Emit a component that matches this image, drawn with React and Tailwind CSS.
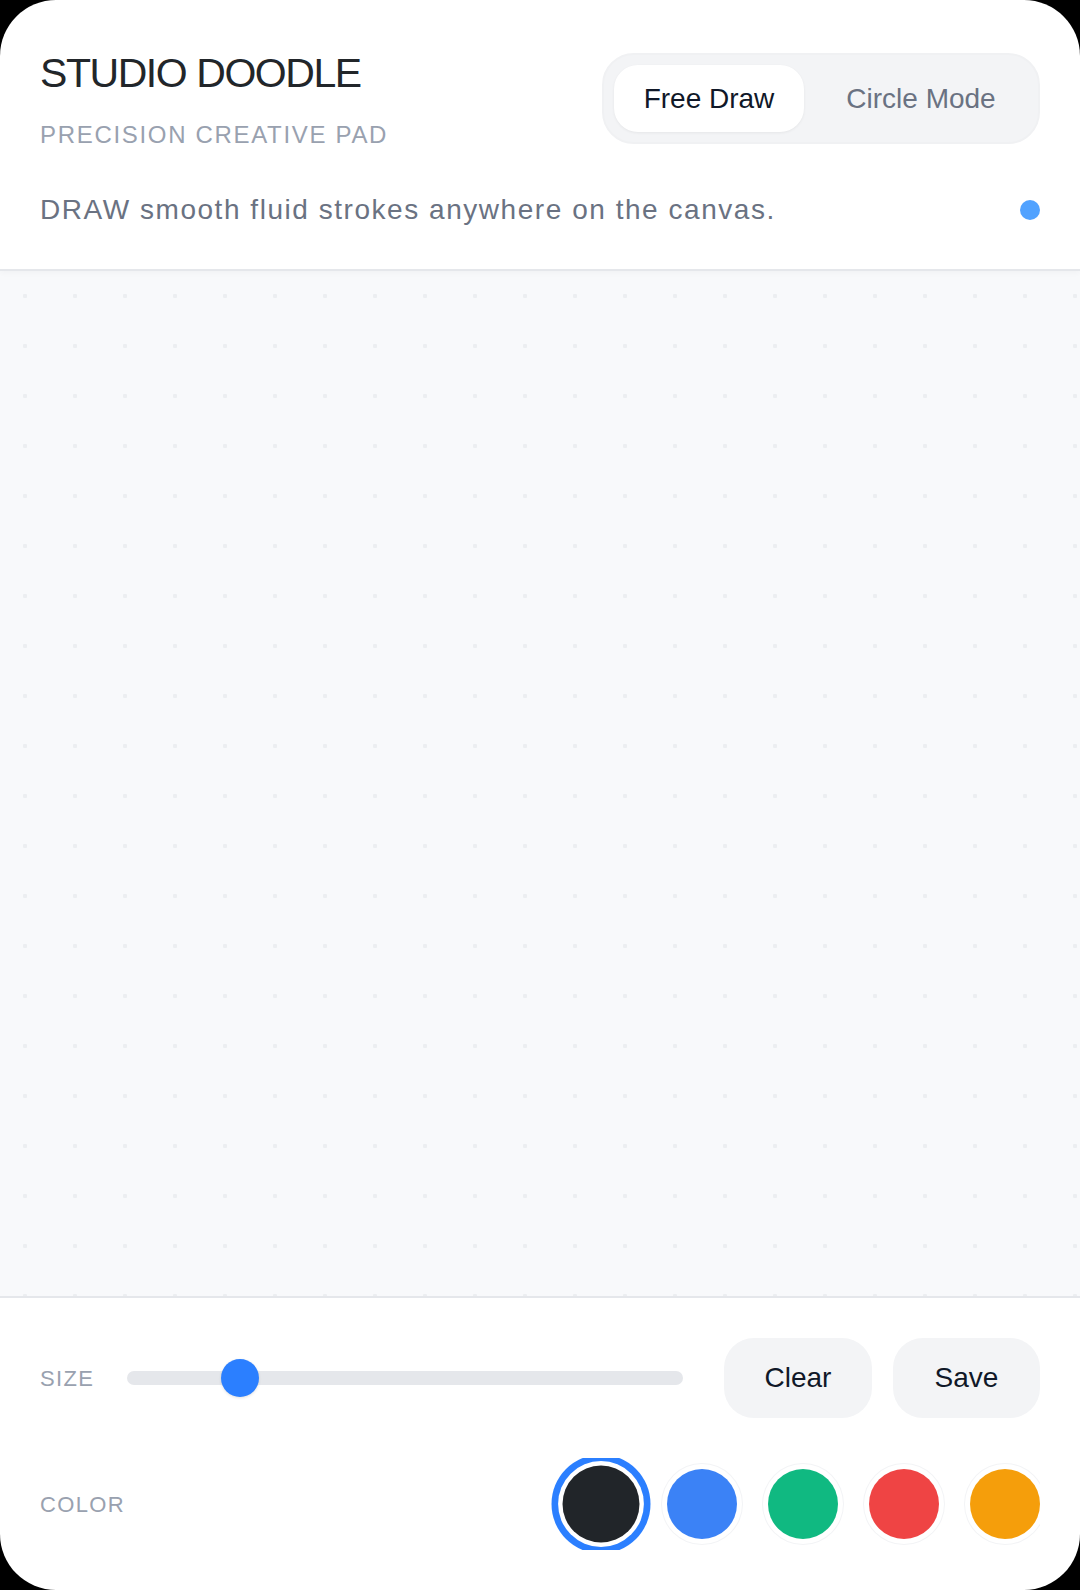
import { useState } from 'react'

const COLORS = [
  { name: 'ink', value: '#212529' },
  { name: 'blue', value: '#3b82f6' },
  { name: 'green', value: '#10b981' },
  { name: 'red', value: '#ef4444' },
  { name: 'amber', value: '#f59e0b' },
]

export default function App() {
  const [mode, setMode] = useState('free')
  const [color, setColor] = useState('ink')

  return (
    <div className="min-h-screen bg-black font-['Liberation_Sans',Arial,sans-serif]">
      <div className="h-screen flex flex-col bg-white rounded-[56px] overflow-hidden">
        {/* header */}
        <div className="px-10 pt-[53px] pb-[39px] border-b-2 border-gray-200 shadow-[0_2px_6px_rgba(0,0,0,0.03)] relative z-10">
          <div className="flex justify-between items-start">
            <div>
              <h1 className="text-[41px] leading-none tracking-[-0.035em] text-[#22262a]">STUDIO DOODLE</h1>
              <div className="mt-[29px] text-[24px] leading-none tracking-[0.07em] text-gray-400">PRECISION CREATIVE PAD</div>
            </div>
            <div className="flex w-[438px] h-[91px] p-[10px] gap-[10px] bg-gray-100 rounded-[32px] border-2 border-[#f0f1f3]">
              <button
                onClick={() => setMode('free')}
                className={
                  mode === 'free'
                    ? 'w-[190px] rounded-[24px] bg-white text-[28px] text-gray-900 shadow-[0_1px_3px_rgba(0,0,0,0.06)]'
                    : 'w-[190px] rounded-[24px] text-[28px] text-gray-500'
                }
              >
                Free Draw
              </button>
              <button
                onClick={() => setMode('circle')}
                className={
                  mode === 'circle'
                    ? 'flex-1 rounded-[24px] bg-white text-[28px] text-gray-900 shadow-[0_1px_3px_rgba(0,0,0,0.06)]'
                    : 'flex-1 rounded-[24px] text-[28px] text-gray-500'
                }
              >
                Circle Mode
              </button>
            </div>
          </div>
          <div className="mt-[43px] flex items-center justify-between">
            <p className="text-[28px] leading-[40px] tracking-[0.055em] text-gray-500">
              DRAW smooth fluid strokes anywhere on the canvas.
            </p>
            <span className="w-[20px] h-[20px] rounded-full bg-blue-400" />
          </div>
        </div>

        {/* canvas */}
        <div className="flex-1 bg-[#f8f9fb] bg-[radial-gradient(circle,#eceef1_2px,transparent_2.5px)] bg-[length:50px_50px]" />

        {/* controls */}
        <div className="border-t-2 border-gray-200 px-10 pt-10 pb-10 flex flex-col gap-10">
          <div className="flex items-center h-[80px]">
            <span className="w-[87px] text-[22px] tracking-[0.06em] text-gray-400">SIZE</span>
            <div className="flex-1 h-[14px] rounded-full bg-gray-200 relative">
              <span className="absolute left-[94px] top-1/2 -translate-y-1/2 w-[38px] h-[38px] rounded-full bg-blue-500 shadow-[0_1px_3px_rgba(0,0,0,0.12)]" />
            </div>
            <button className="ml-[41px] w-[148px] h-[80px] rounded-[30px] bg-gray-100 text-[28px] text-gray-900">Clear</button>
            <button className="ml-[21px] w-[147px] h-[80px] rounded-[30px] bg-gray-100 text-[28px] text-gray-900">Save</button>
          </div>
          <div className="flex items-center justify-between">
            <span className="text-[22px] tracking-[0.06em] text-gray-400">COLOR</span>
            <div className="flex gap-[31px] py-[11px] pl-[16px] overflow-hidden">
              {COLORS.map((c) => (
                <button
                  key={c.name}
                  onClick={() => setColor(c.name)}
                  style={{ backgroundColor: c.value }}
                  className={
                    color === c.name
                      ? 'w-[70px] h-[70px] shrink-0 rounded-full scale-110 ring-[6px] ring-blue-500 ring-offset-4 ring-offset-white'
                      : 'w-[70px] h-[70px] shrink-0 rounded-full shadow-[0_0_0_5px_#ffffff,0_0_0_6px_#f3f4f6]'
                  }
                />
              ))}
            </div>
          </div>
        </div>
      </div>
    </div>
  )
}
